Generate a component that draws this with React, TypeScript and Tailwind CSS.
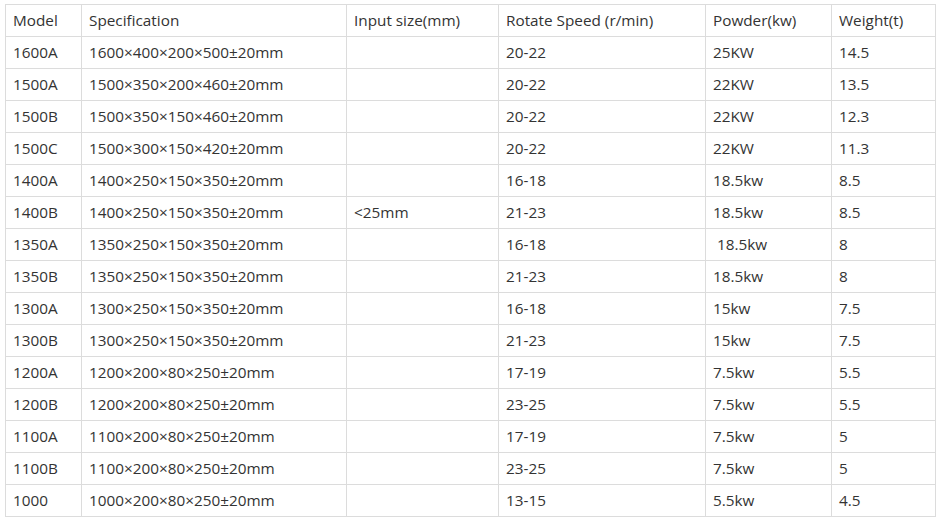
import React from "react";

const rows: string[][] = [
  ["1600A", "1600×400×200×500±20mm", "", "20-22", "25KW", "14.5"],
  ["1500A", "1500×350×200×460±20mm", "", "20-22", "22KW", "13.5"],
  ["1500B", "1500×350×150×460±20mm", "", "20-22", "22KW", "12.3"],
  ["1500C", "1500×300×150×420±20mm", "", "20-22", "22KW", "11.3"],
  ["1400A", "1400×250×150×350±20mm", "", "16-18", "18.5kw", "8.5"],
  ["1400B", "1400×250×150×350±20mm", "<25mm", "21-23", "18.5kw", "8.5"],
  ["1350A", "1350×250×150×350±20mm", "", "16-18", "\u00a018.5kw", "8"],
  ["1350B", "1350×250×150×350±20mm", "", "21-23", "18.5kw", "8"],
  ["1300A", "1300×250×150×350±20mm", "", "16-18", "15kw", "7.5"],
  ["1300B", "1300×250×150×350±20mm", "", "21-23", "15kw", "7.5"],
  ["1200A", "1200×200×80×250±20mm", "", "17-19", "7.5kw", "5.5"],
  ["1200B", "1200×200×80×250±20mm", "", "23-25", "7.5kw", "5.5"],
  ["1100A", "1100×200×80×250±20mm", "", "17-19", "7.5kw", "5"],
  ["1100B", "1100×200×80×250±20mm", "", "23-25", "7.5kw", "5"],
  ["1000", "1000×200×80×250±20mm", "", "13-15", "5.5kw", "4.5"],
];

const header = ["Model", "Specification", "Input size(mm)", "Rotate Speed (r/min)", "Powder(kw)", "Weight(t)"];
const widths = ["w-[76px]", "w-[265px]", "w-[152px]", "w-[207px]", "w-[126px]", "w-[104px]"];

export default function App() {
  return (
    <div className="w-[939px] h-[526px] bg-white pt-[4px] pl-[5px]" style={{ fontFamily: '"Open Sans", "Noto Sans", sans-serif' }}>
      <table className="border-collapse table-fixed w-[931px] text-[15.3px] text-[#333333]">
        <colgroup>
          {widths.map((w, i) => (
            <col key={i} className={w} />
          ))}
        </colgroup>
        <tbody>
          <tr>
            {header.map((h, i) => (
              <td key={i} className="h-[32px] border border-[#dcdcdc] px-[7px] py-0 align-middle whitespace-nowrap">
                {h}
              </td>
            ))}
          </tr>
          {rows.map((r, ri) => (
            <tr key={ri}>
              {r.map((c, ci) => (
                <td key={ci} className="h-[32px] border border-[#dcdcdc] px-[7px] py-0 align-middle whitespace-nowrap">
                  {c}
                </td>
              ))}
            </tr>
          ))}
        </tbody>
      </table>
    </div>
  );
}
